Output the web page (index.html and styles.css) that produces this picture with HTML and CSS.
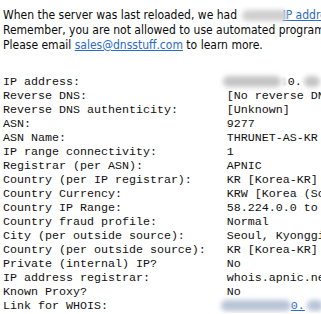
FILE: index.html
```html
<!DOCTYPE html>
<html>
<head>
<meta charset="utf-8">
<link rel="stylesheet" href="styles.css">
</head>
<body>
<div class="page">
  <p class="intro">When the server was last reloaded, we had <span class="redact redact-count"></span><a href="#" class="link">IP addresses</a> in our database.<br>Remember, you are not allowed to use automated programs to query this site.<br>Please email <a href="#" class="link">sales@dnsstuff.com</a> to learn more.</p>
  <div class="info">
    <div class="label">IP address:</div><div class="value"><span class="redact redact-ip"></span><span class="faint">1</span>0.<span class="redact redact-tail"></span></div>
    <div class="label">Reverse DNS:</div><div class="value">[No reverse DNS entry per ns1.hananet.net]</div>
    <div class="label">Reverse DNS authenticity:</div><div class="value">[Unknown]</div>
    <div class="label">ASN:</div><div class="value">9277</div>
    <div class="label">ASN Name:</div><div class="value">THRUNET-AS-KR (Thrunet)</div>
    <div class="label">IP range connectivity:</div><div class="value">1</div>
    <div class="label">Registrar (per ASN):</div><div class="value">APNIC</div>
    <div class="label">Country (per IP registrar):</div><div class="value">KR [Korea-KR]</div>
    <div class="label">Country Currency:</div><div class="value">KRW [Korea (South) Won]</div>
    <div class="label">Country IP Range:</div><div class="value">58.224.0.0 to 58.239.255.255</div>
    <div class="label">Country fraud profile:</div><div class="value">Normal</div>
    <div class="label">City (per outside source):</div><div class="value">Seoul, Kyonggi-do</div>
    <div class="label">Country (per outside source):</div><div class="value">KR [Korea-KR]</div>
    <div class="label">Private (internal) IP?</div><div class="value">No</div>
    <div class="label">IP address registrar:</div><div class="value">whois.apnic.net</div>
    <div class="label">Known Proxy?</div><div class="value">No</div>
    <div class="label">Link for WHOIS:</div><div class="value"><a href="#" class="link whois"><span class="redact redact-whois"></span>0.<span class="redact redact-tail2"></span></a></div>
  </div>
</div>
</body>
</html>
```
FILE: styles.css
```css
html, body {
  margin: 0;
  padding: 0;
  background: #ffffff;
  overflow: hidden;
}
.page {
  width: 700px;
  padding: 8px 3px 0 3px;
}
.intro {
  margin: 0 0 22px 0;
  font-family: "DejaVu Sans Condensed", "DejaVu Sans", sans-serif;
  font-stretch: condensed;
  font-size: 12px;
  line-height: 15px;
  color: #0a0a0a;
  white-space: nowrap;
}
.link {
  color: #2a6bc3;
  text-decoration: underline;
}
.info {
  display: grid;
  grid-template-columns: 32ch auto;
  font-family: "Liberation Mono", "Courier New", monospace;
  font-size: 11.67px;
  line-height: 14px;
  color: #111111;
  white-space: pre;
}
.value {
  position: relative;
}
.redact {
  display: inline-block;
  vertical-align: middle;
  height: 11px;
  background: #c4c4c4;
  border-radius: 6px;
  filter: blur(2.5px);
}
.redact-count {
  position: relative;
  z-index: 1;
  width: 46px;
  margin-left: 2px;
  margin-right: -6px;
  background: #cfcfcf;
}
.redact-ip {
  width: 58px;
  margin-left: -4px;
}
.faint {
  color: #c0c0c0;
  filter: blur(0.8px);
}
.redact-tail {
  width: 16px;
  margin-left: 2px;
}
.redact-whois {
  width: 70px;
  margin-left: -6px;
  background: #b9c4d6;
}
.redact-tail2 {
  width: 16px;
  margin-left: 2px;
  background: #b9c4d6;
}
.whois {
  color: #2a6bc3;
}
```
